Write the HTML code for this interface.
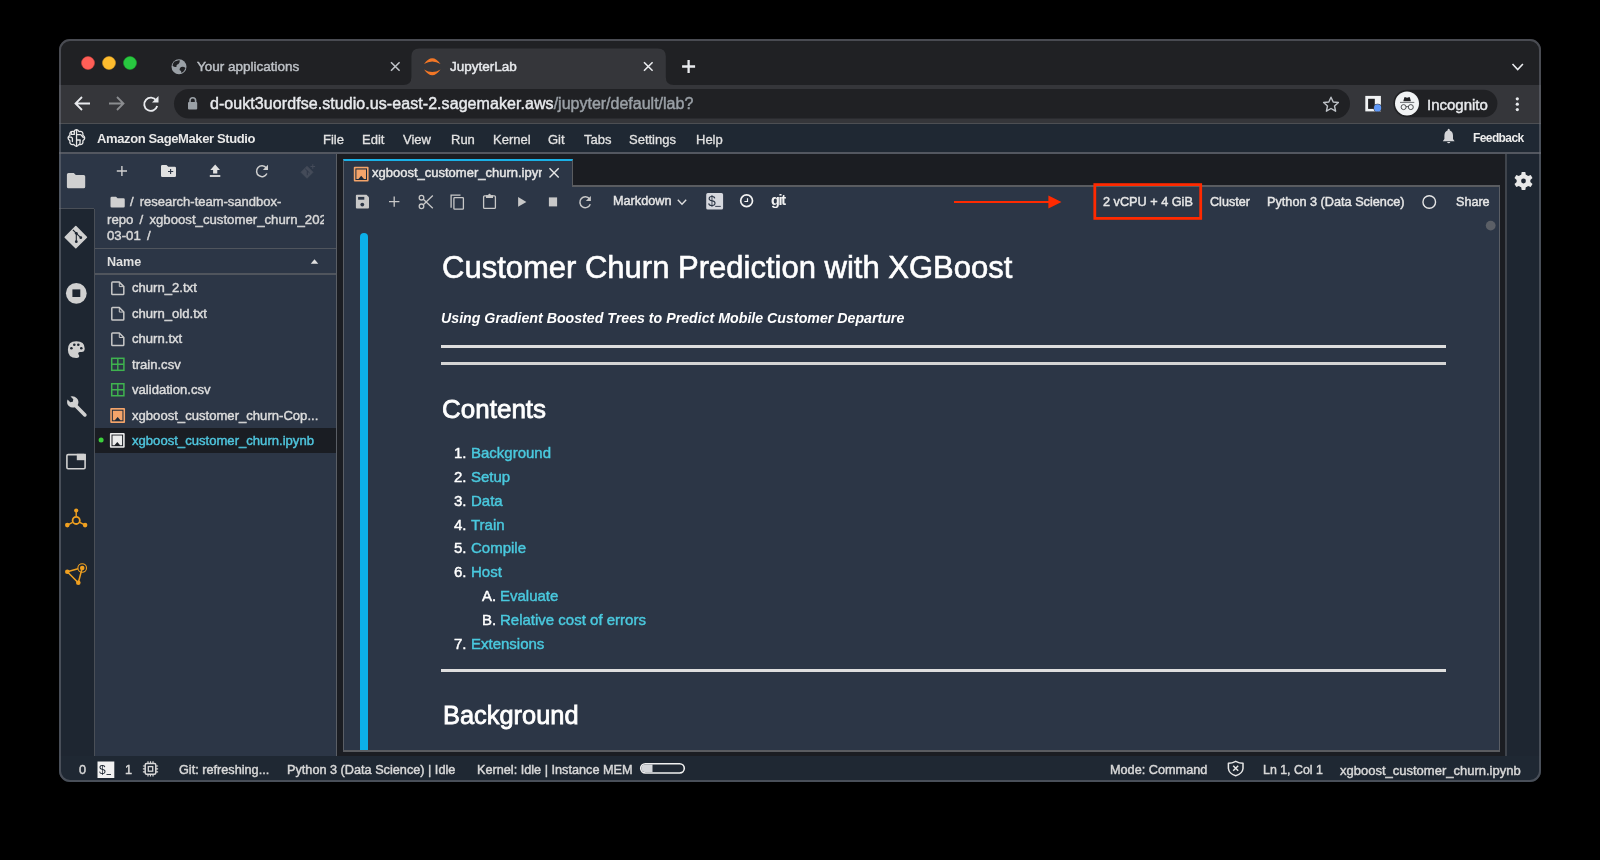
<!DOCTYPE html>
<html><head><meta charset="utf-8">
<style>
*{margin:0;padding:0;box-sizing:border-box}
html,body{width:1600px;height:860px;background:#000;overflow:hidden}
body{font-family:"Liberation Sans",sans-serif;position:relative}
.a{position:absolute}
.t{position:absolute;white-space:nowrap;line-height:1;-webkit-text-stroke-width:0.45px;will-change:transform}
#win{position:absolute;left:0;top:0;width:1600px;height:860px;clip-path:inset(39px 59px 78px 59px round 11px);background:#202124}
#frame{position:absolute;left:59px;top:39px;width:1482px;height:743px;border:2px solid rgba(108,112,120,0.55);border-radius:11px;pointer-events:none}
svg{position:absolute;overflow:visible}
</style></head><body>
<div id="win">
  <!-- chrome tab strip -->
  <div class="a" style="left:59px;top:39px;width:1482px;height:46px;background:#202124"></div>
  <!-- toolbar -->
  <div class="a" style="left:59px;top:85px;width:1482px;height:38px;background:#35363a"></div>
  <div class="a" style="left:59px;top:123px;width:1482px;height:1px;background:#4d4f53"></div>

  <!-- traffic lights -->
  <svg style="left:0;top:0" width="1600" height="860">
    <circle cx="88" cy="63" r="6.5" fill="#ff5f57" stroke="#e0443e" stroke-width="0.5"/>
    <circle cx="109" cy="63" r="6.5" fill="#febc2e" stroke="#dea123" stroke-width="0.5"/>
    <circle cx="130" cy="63" r="6.5" fill="#28c840" stroke="#1aab29" stroke-width="0.5"/>
    <!-- active tab -->
    <path d="M403.4,85 Q411.4,85 411.4,77 L411.4,56.5 Q411.4,48.5 419.4,48.5 L657.8,48.5 Q665.8,48.5 665.8,56.5 L665.8,77 Q665.8,85 673.8,85 Z" fill="#35363a"/>
    <!-- globe -->
    <circle cx="179" cy="66.7" r="7.5" fill="#9aa0a6"/>
    <path d="M174.5,61.5 Q177,60.5 179.5,60 Q180.5,62.5 178.5,64 Q176,64.5 176.5,67 Q174,67.5 172.5,65.5 Q173,63 174.5,61.5 Z M181,67 Q183.5,66 185.5,68 Q184.5,71.5 181.5,73 Q181.5,70.5 179.5,70 Q179.5,68 181,67 Z" fill="#202124"/>
    <!-- close x inactive -->
    <path d="M391,62.2 L399.6,70.8 M399.6,62.2 L391,70.8" stroke="#bdc1c6" stroke-width="1.6"/>
    <!-- jupyter icon -->
    <path d="M424,64 Q432.25,52.5 440.5,64 Q432.25,59 424,64 Z" fill="#f37726"/>
    <path d="M424,69.5 Q432.25,81 440.5,69.5 Q432.25,74.5 424,69.5 Z" fill="#f37726"/>
    <!-- close x active -->
    <path d="M644,62.2 L652.6,70.8 M652.6,62.2 L644,70.8" stroke="#e8eaed" stroke-width="1.6"/>
    <!-- new tab plus -->
    <path d="M688.6,60 L688.6,73 M682.1,66.5 L695.1,66.5" stroke="#e8eaed" stroke-width="2.3"/>
    <!-- chevron -->
    <path d="M1512.5,64 L1517.7,69.5 L1522.9,64" stroke="#e8eaed" stroke-width="1.6" fill="none"/>
    <!-- back -->
    <path d="M90,103.5 L76,103.5 M82,97 L75.5,103.5 L82,110" stroke="#e8eaed" stroke-width="1.8" fill="none"/>
    <!-- forward -->
    <path d="M109,103.5 L123,103.5 M117,97 L123.5,103.5 L117,110" stroke="#8b8d90" stroke-width="1.8" fill="none"/>
    <!-- reload -->
    <path d="M156.3,100.5 A6.6,6.6 0 1 0 157.2,106" stroke="#e8eaed" stroke-width="1.9" fill="none"/>
    <path d="M158.5,96 L158.5,102.5 L152,102.5 Z" fill="#e8eaed"/>
    <!-- omnibox -->
    <rect x="174" y="89" width="1176" height="29.5" rx="14.75" fill="#202124"/>
    <!-- lock -->
    <path d="M190,102.5 L190,100.5 A2.8,2.8 0 0 1 195.6,100.5 L195.6,102.5" stroke="#9aa0a6" stroke-width="1.6" fill="none"/>
    <rect x="188" y="102" width="9.2" height="7.5" rx="1" fill="#9aa0a6"/>
    <!-- star -->
    <path d="M1331,97.2 L1333.2,102 L1338.4,102.5 L1334.5,106 L1335.6,111.2 L1331,108.5 L1326.4,111.2 L1327.5,106 L1323.6,102.5 L1328.8,102 Z" stroke="#bdc1c6" stroke-width="1.4" fill="none" stroke-linejoin="round"/>
    <!-- extension icon -->
    <rect x="1365.3" y="95.9" width="15.6" height="15.5" fill="#f1f3f4"/>
    <rect x="1368.1" y="98.8" width="6.7" height="10.1" fill="#202124"/>
    <circle cx="1377.6" cy="107.9" r="4.1" fill="#35363a"/>
    <circle cx="1377.6" cy="107.9" r="3.6" fill="#5e97f6"/>
    <!-- incognito pill -->
    <rect x="1393.4" y="89.8" width="104" height="27.5" rx="13.75" fill="#202124"/>
    <circle cx="1407" cy="103.6" r="12" fill="#f1f3f4"/>
    <path d="M1403.3,101.2 L1404.3,97.6 Q1404.6,96.9 1405.4,97.2 L1407.1,97.8 L1408.8,97.2 Q1409.6,96.9 1409.9,97.6 L1410.9,101.2 Z" fill="#202124"/>
    <rect x="1400" y="101.9" width="14.3" height="0.9" fill="#5f6368"/>
    <circle cx="1403.6" cy="107.1" r="2.5" stroke="#3c4043" stroke-width="0.9" fill="none"/>
    <circle cx="1410.8" cy="107.1" r="2.5" stroke="#3c4043" stroke-width="0.9" fill="none"/>
    <path d="M1406,106.8 Q1407.2,106.2 1408.4,106.8" stroke="#3c4043" stroke-width="0.9" fill="none"/>
    <!-- kebab -->
    <circle cx="1517.3" cy="98.8" r="1.6" fill="#e8eaed"/>
    <circle cx="1517.3" cy="104.2" r="1.6" fill="#e8eaed"/>
    <circle cx="1517.3" cy="109.6" r="1.6" fill="#e8eaed"/>
  </svg>
  <div class="t" style="left:196.5px;top:59.6px;font-size:13.5px;color:#bdc1c6">Your applications</div>
  <div class="t" style="left:449.9px;top:59.6px;font-size:13.5px;color:#e8eaed">JupyterLab</div>
  <div class="t" style="left:210px;top:95.7px;font-size:16px;color:#e8eaed"><span style="letter-spacing:0.067px">d-oukt3uordfse.studio.us-east-2.sagemaker.aws</span><span style="color:#9aa0a6">/jupyter/default/lab?</span></div>
  <div class="t" style="left:1427px;top:97px;font-size:15px;color:#e8eaed">Incognito</div>
  <!-- sagemaker menubar -->
  <div class="a" style="left:59px;top:124px;width:1482px;height:28px;background:#1f2833"></div>
  <div class="a" style="left:59px;top:152px;width:1482px;height:2px;background:#535760"></div>
  <!-- main body -->
  <div class="a" style="left:59px;top:154px;width:1482px;height:602px;background:#1b1d22"></div>
  <!-- left sidebar -->
  <div class="a" style="left:59px;top:154px;width:35px;height:602px;background:#1e2631"></div>
  <div class="a" style="left:59px;top:154px;width:36px;height:55px;background:#2c3646"></div>
  <div class="a" style="left:59px;top:208px;width:35px;height:1px;background:#4a4f57"></div>
  <div class="a" style="left:94px;top:209px;width:1px;height:547px;background:#4a4f57"></div>
  <!-- file panel -->
  <div class="a" style="left:95px;top:154px;width:241px;height:602px;background:#2c3646"></div>
  <div class="a" style="left:336px;top:154px;width:1px;height:602px;background:#5a5e65"></div>
  <!-- right sidebar -->
  <div class="a" style="left:1505px;top:154px;width:2px;height:602px;background:#3f444c"></div>
  <div class="a" style="left:1507px;top:154px;width:34px;height:602px;background:#1e2631"></div>
  <!-- notebook panel -->
  <div class="a" style="left:343px;top:185px;width:1157px;height:567px;background:#2c3646;border:1px solid #5a5e65;border-top:2px solid #5a5c60;border-bottom:2px solid #5a5c60"></div>
  <!-- notebook tab -->
  <div class="a" style="left:343px;top:159px;width:230px;height:28px;background:#2c3646;border-left:1px solid #5a5e65;border-right:1.5px solid #5a5c60;border-top:2px solid #1ab0e6"></div>
  <div class="a" style="left:95px;top:427.8px;width:241px;height:25.2px;background:#1a1d23"></div>
  <!-- status bar -->
  <div class="a" style="left:59px;top:756px;width:1482px;height:26px;background:#1f2833"></div>

  <svg style="left:0;top:0" width="1600" height="860">
    <!-- brain -->
    <g fill="none" stroke="#e8e8e8" stroke-width="1.3" stroke-linejoin="round" stroke-linecap="round">
      <path d="M73.72,131.53 Q76.40,127.80 79.08,131.53 Q83.61,130.79 82.87,135.32 Q86.60,138.00 82.87,140.68 Q83.61,145.21 79.08,144.47 Q76.40,148.20 73.72,144.47 Q69.19,145.21 69.93,140.68 Q66.20,138.00 69.93,135.32 Q69.19,130.79 73.72,131.53 Z"/>
      <path d="M76.55,129.8 L76.55,146.2 M71.25,131.8 L71.25,134.4 L74.3,134.4 L74.3,131.5 M68.4,137.2 L71.4,137.2 L72.4,138.2 L72.4,141.6 M76.8,134.6 L80.7,134.6 L83.3,137.5 M76.8,140 L80.2,140 L79.9,143.6"/>
    </g>
    <!-- bell -->
    <path d="M1448.7,128.8 Q1449.8,128.8 1449.9,130.6 Q1452.9,131.7 1453,135.5 L1453,139 L1454.6,141.3 L1442.8,141.3 L1444.4,139 L1444.4,135.5 Q1444.5,131.7 1447.5,130.6 Q1447.6,128.8 1448.7,128.8 Z" fill="#d4d5d8"/>
    <path d="M1447.1,142 L1450.3,142 Q1450.1,143.2 1448.7,143.2 Q1447.3,143.2 1447.1,142 Z" fill="#d4d5d8"/>

    <!-- sidebar folder -->
    <path d="M68.5,172.9 L73.8,172.9 L75.8,174.9 L83.7,174.9 Q85.2,174.9 85.2,176.4 L85.2,186.8 Q85.2,188.3 83.7,188.3 L68.4,188.3 Q66.9,188.3 66.9,186.8 L66.9,174.5 Q66.9,172.9 68.5,172.9 Z" fill="#d0d0d0"/>
    <!-- git diamond -->
    <path d="M75.8,226.6 L86.4,237.2 L75.8,247.8 L65.2,237.2 Z" fill="#d0d0d0" stroke="#d0d0d0" stroke-width="1.5" stroke-linejoin="round"/>
    <g stroke="#1e2631" stroke-width="1.1" fill="none"><path d="M72.9,229.8 L76.3,233.3 L76.3,241.7 M76.3,233.3 L80.8,237.7"/></g>
    <circle cx="76.3" cy="233.3" r="1.4" fill="#1e2631"/><circle cx="80.8" cy="237.7" r="1.4" fill="#1e2631"/><circle cx="76.3" cy="241.7" r="1.4" fill="#1e2631"/>
    <!-- stop circle -->
    <circle cx="76.3" cy="293.35" r="10.4" fill="#d0d0d0"/>
    <rect x="72.4" y="289.4" width="7.9" height="7.6" fill="#1e2631"/>
    <!-- palette -->
    <path d="M76.3,341.3 Q84.7,341.3 84.7,348.5 Q84.7,352 81.5,352 L79.8,352 Q78.2,352 78.2,353.5 Q78.2,354.3 79,355.2 Q79.5,356 79,357 Q78.3,358.1 76.3,358.1 Q67.9,358.1 67.9,349.7 Q67.9,341.3 76.3,341.3 Z" fill="#d0d0d0"/>
    <circle cx="71.4" cy="348.25" r="1.3" fill="#1e2631"/><circle cx="74.3" cy="344.8" r="1.3" fill="#1e2631"/><circle cx="78.3" cy="344.8" r="1.3" fill="#1e2631"/><circle cx="81.3" cy="348.25" r="1.3" fill="#1e2631"/>
    <!-- wrench -->
    <path d="M84.9,414.9 L75.3,405.3" stroke="#d0d0d0" stroke-width="3.6" stroke-linecap="round"/>
    <path d="M70.5,396.5 L73.3,399.3 L72.8,401.8 L70.3,402.3 L67.5,399.5 Q66.2,403.5 68.8,406 Q71.5,408.5 75.5,407 L78,404.5 Q79.3,400.7 76.8,398.2 Q74.3,395.7 70.5,396.5 Z" fill="#d0d0d0"/>
    <!-- tabs -->
    <rect x="66.9" y="454.6" width="18.2" height="14.2" rx="1.2" fill="none" stroke="#d0d0d0" stroke-width="1.6"/>
    <rect x="76.8" y="453.8" width="9.1" height="6.4" fill="#d0d0d0"/>
    <!-- orange 1 -->
    <g stroke="#f0a020" stroke-width="1.4" fill="none">
      <path d="M76.2,510.5 L76.2,516 M67.3,525.1 L72.6,522.3 M85.1,525.1 L79.8,522.3"/>
      <circle cx="76.2" cy="520.4" r="3.6" stroke-width="1.8"/>
    </g>
    <circle cx="76.2" cy="510.5" r="2.1" fill="#f0a020"/><circle cx="67.3" cy="525.1" r="2.3" fill="#f0a020"/><circle cx="85.1" cy="525.1" r="2.3" fill="#f0a020"/>
    <!-- orange 2 -->
    <g stroke="#f0a020" stroke-width="1.5" fill="none">
      <path d="M67.3,571.7 L78.3,582.7 L82.2,568 M67.3,571.7 L78,568.8"/>
      <circle cx="82.2" cy="568" r="4.3" stroke-width="1.1"/>
    </g>
    <circle cx="67.3" cy="571.7" r="2.3" fill="#f0a020"/><circle cx="78.3" cy="582.7" r="2.3" fill="#f0a020"/><circle cx="82.2" cy="568" r="2.3" fill="#f0a020"/>

    <!-- file panel toolbar -->
    <path d="M121.9,165.9 L121.9,176.1 M116.8,171 L127,171" stroke="#d0d0d0" stroke-width="1.4"/>
    <path d="M162.3,164.9 L166.5,164.9 L168.3,166.7 L174.7,166.7 Q176,166.7 176,168 L176,175.8 Q176,177.1 174.7,177.1 L162.3,177.1 Q161,177.1 161,175.8 L161,166.2 Q161,164.9 162.3,164.9 Z" fill="#e0e0e0"/>
    <path d="M170.6,168.9 L170.6,174.1 M168,171.5 L173.2,171.5" stroke="#2c3646" stroke-width="1.1"/>
    <path d="M215.2,164.6 L220,170 L217.3,170 L217.3,173.4 L213.1,173.4 L213.1,170 L210.3,170 Z" fill="#e0e0e0"/>
    <rect x="209.8" y="175.1" width="10.5" height="1.8" fill="#e0e0e0"/>
    <path d="M266.3,168 A5.4,5.4 0 1 0 266.9,173.5" stroke="#d0d0d0" stroke-width="1.5" fill="none"/>
    <path d="M268,164.8 L268,170 L262.8,170 Z" fill="#d0d0d0"/>
    <path d="M307,166.3 L313,172.3 L307,178.3 L301,172.3 Z" fill="#444b59" stroke="#444b59" stroke-width="0.8" stroke-linejoin="round"/>
    <path d="M305.2,168.8 L307.3,170.8 L307.3,175.2 M307.3,170.8 L309.6,173" stroke="#2c3646" stroke-width="0.9" fill="none"/>
    <path d="M312.8,164.2 L312.8,168.8 M310.5,166.5 L315.1,166.5" stroke="#444b59" stroke-width="1"/>
    <!-- breadcrumb folder -->
    <path d="M111.8,196.7 L116,196.7 L117.6,198.3 L123.5,198.3 Q124.75,198.3 124.75,199.5 L124.75,206.3 Q124.75,207.5 123.5,207.5 L111.8,207.5 Q110.5,207.5 110.5,206.3 L110.5,198 Q110.5,196.7 111.8,196.7 Z" fill="#d0d0d0"/>
    <!-- sort triangle -->
    <path d="M310.75,263.75 L314.5,259.25 L318.25,263.75 Z" fill="#e0e0e0"/>
    <path d="M112.5,282.10 L119.3,282.10 L123.8,286.60 L123.8,293.80 Q123.8,294.60 123,294.60 L112.6,294.60 Q111.8,294.60 111.8,293.80 L111.8,282.90 Q111.8,282.10 112.5,282.10 Z" fill="none" stroke="#c8c8c8" stroke-width="1.5" stroke-linejoin="round"/>
    <path d="M119.3,282.10 L119.3,286.60 L123.8,286.60" fill="none" stroke="#c8c8c8" stroke-width="1" />
    <path d="M112.5,307.55 L119.3,307.55 L123.8,312.05 L123.8,319.25 Q123.8,320.05 123,320.05 L112.6,320.05 Q111.8,320.05 111.8,319.25 L111.8,308.35 Q111.8,307.55 112.5,307.55 Z" fill="none" stroke="#c8c8c8" stroke-width="1.5" stroke-linejoin="round"/>
    <path d="M119.3,307.55 L119.3,312.05 L123.8,312.05" fill="none" stroke="#c8c8c8" stroke-width="1" />
    <path d="M112.5,333.00 L119.3,333.00 L123.8,337.50 L123.8,344.70 Q123.8,345.50 123,345.50 L112.6,345.50 Q111.8,345.50 111.8,344.70 L111.8,333.80 Q111.8,333.00 112.5,333.00 Z" fill="none" stroke="#c8c8c8" stroke-width="1.5" stroke-linejoin="round"/>
    <path d="M119.3,333.00 L119.3,337.50 L123.8,337.50" fill="none" stroke="#c8c8c8" stroke-width="1" />
    <rect x="111.7" y="358.30" width="12.2" height="12" fill="none" stroke="#3fb34f" stroke-width="1.5"/>
    <path d="M117.8,358.30 L117.8,370.30 M111.7,364.30 L123.9,364.30" stroke="#3fb34f" stroke-width="1.4"/>
    <rect x="111.7" y="383.75" width="12.2" height="12" fill="none" stroke="#3fb34f" stroke-width="1.5"/>
    <path d="M117.8,383.75 L117.8,395.75 M111.7,389.75 L123.9,389.75" stroke="#3fb34f" stroke-width="1.4"/>
    <rect x="110.25" y="408.1" width="14.8" height="14.8" rx="1" fill="#f4a46a"/>
    <rect x="111.85" y="409.70000000000005" width="11.6" height="11.6" fill="#1f2b3a"/>
    <path d="M112.85,410.70000000000005 L122.45,410.70000000000005 L122.45,420.3 L120.45,420.3 L117.65,417.1 L114.85,420.3 L112.85,420.3 Z" fill="#f4a46a"/>
    <rect x="109.9" y="433.0" width="14.8" height="14.8" rx="1" fill="#ececec"/>
    <rect x="111.5" y="434.6" width="11.6" height="11.6" fill="#1a1d23"/>
    <path d="M112.5,435.6 L122.10000000000001,435.6 L122.10000000000001,445.2 L120.10000000000001,445.2 L117.30000000000001,442.0 L114.5,445.2 L112.5,445.2 Z" fill="#ececec"/>
    <circle cx="101.1" cy="440.1" r="2.5" fill="#3ccf3c"/>
    <rect x="353.8" y="166.8" width="14.8" height="14.8" rx="1" fill="#f4a46a"/>
    <rect x="355.40000000000003" y="168.4" width="11.6" height="11.6" fill="#1f2b3a"/>
    <path d="M356.40000000000003,169.4 L366.0,169.4 L366.0,179.0 L364.0,179.0 L361.2,175.8 L358.40000000000003,179.0 L356.40000000000003,179.0 Z" fill="#f4a46a"/>

    <!-- tab close -->
    <path d="M549.5,168.2 L558.7,177.4 M558.7,168.2 L549.5,177.4" stroke="#e6e6e6" stroke-width="1.4"/>
    <!-- notebook toolbar -->
    <path d="M356.8,194.8 L366.5,194.8 L369,197.3 L369,207.6 Q369,208.6 368,208.6 L356.9,208.6 Q355.9,208.6 355.9,207.6 L355.9,195.8 Q355.9,194.8 356.8,194.8 Z" fill="#c8c8c8"/>
    <rect x="358.1" y="196.9" width="6.2" height="2.8" fill="#2c3646"/>
    <circle cx="362.3" cy="204.6" r="1.9" fill="#2c3646"/>
    <path d="M394.2,196.6 L394.2,206.8 M389,201.7 L399.4,201.7" stroke="#c8c8c8" stroke-width="1.3"/>
    <g stroke="#c8c8c8" stroke-width="1.3" fill="none">
      <circle cx="421.5" cy="197.7" r="2.3"/><circle cx="421.5" cy="206.3" r="2.3"/>
      <path d="M423.3,199.2 L432.8,208.2 M423.3,204.8 L432.8,195.5"/>
    </g>
    <g stroke="#c8c8c8" stroke-width="1.3" fill="none">
      <path d="M451.1,207.8 L451.1,195.2 L460.5,195.2"/>
      <rect x="453.9" y="197.6" width="9.5" height="11.6" rx="0.8"/>
    </g>
    <g stroke="#c8c8c8" stroke-width="1.3" fill="none">
      <rect x="483.6" y="195.8" width="11.8" height="12.6" rx="1"/>
    </g>
    <rect x="486" y="195.2" width="7" height="2.8" fill="#c8c8c8"/>
    <circle cx="489.5" cy="194.9" r="1.2" fill="#c8c8c8"/>
    <path d="M518.1,197 L526.4,201.9 L518.1,206.75 Z" fill="#c8c8c8"/>
    <rect x="548.9" y="197.4" width="8.2" height="9" fill="#c8c8c8"/>
    <path d="M589.6,199 A5.4,5.4 0 1 0 590.3,204.3" stroke="#c8c8c8" stroke-width="1.5" fill="none"/>
    <path d="M590.9,195.9 L590.9,201 L585.8,201 Z" fill="#c8c8c8"/>
    <path d="M677.8,199.8 L682,204.2 L686.2,199.8" stroke="#e0e0e0" stroke-width="1.4" fill="none"/>
    <rect x="706.2" y="193.1" width="16.9" height="16.5" rx="1.6" fill="#d6d8de"/>
    <path d="M715.2,206.4 L720.8,206.4" stroke="#2c3646" stroke-width="0.9"/>
    <circle cx="746.6" cy="200.7" r="5.9" fill="none" stroke="#f2f2f2" stroke-width="1.7"/>
    <path d="M747.5,198.3 L747.5,201.5 L744.4,201.5" fill="none" stroke="#f2f2f2" stroke-width="1.2"/>
    <!-- red arrow + box -->
    <path d="M954,201.9 L1049,201.9" stroke="#ff2a00" stroke-width="2"/>
    <path d="M1048.4,195.4 L1061.5,201.9 L1048.4,208.5 Z" fill="#ff2a00"/>
    <rect x="1094.8" y="184.6" width="105.9" height="33.8" fill="none" stroke="#ff2a00" stroke-width="2.8"/>
    <!-- kernel circle -->
    <circle cx="1429.25" cy="202" r="6.3" fill="none" stroke="#e6e6e6" stroke-width="1.4"/>
    <circle cx="1490.7" cy="225.6" r="4.9" fill="#5b5f66"/>
    <!-- gear -->
    <g transform="translate(1523.5,181)">
      <path d="M-1.8,-9 L1.8,-9 L2.3,-6.3 Q3.6,-5.8 4.6,-5 L7.2,-6 L9,-2.9 L6.8,-1.1 Q7,0 6.8,1.1 L9,2.9 L7.2,6 L4.6,5 Q3.6,5.8 2.3,6.3 L1.8,9 L-1.8,9 L-2.3,6.3 Q-3.6,5.8 -4.6,5 L-7.2,6 L-9,2.9 L-6.8,1.1 Q-7,0 -6.8,-1.1 L-9,-2.9 L-7.2,-6 L-4.6,-5 Q-3.6,-5.8 -2.3,-6.3 Z" fill="#e8e8e8"/>
      <circle cx="0" cy="0" r="2.4" fill="#1f2733"/>
    </g>
    <!-- status bar icons -->
    <rect x="97.5" y="761.5" width="16.8" height="16.5" fill="#f2f2f2"/>
    <path d="M106.5,774.5 L111,774.5" stroke="#1f2833" stroke-width="0.9"/>
    <g stroke="#d8d8d8" fill="none">
      <rect x="145.2" y="763.5" width="10.6" height="10.8" rx="1.5" stroke-width="1.5"/>
      <rect x="148.3" y="766.6" width="4.4" height="4.6" stroke-width="1.3"/>
      <path d="M148,761.2 L148,763.5 M150.5,761.2 L150.5,763.5 M153,761.2 L153,763.5 M148,774.3 L148,776.6 M150.5,774.3 L150.5,776.6 M153,774.3 L153,776.6 M142.9,766 L145.2,766 M142.9,768.9 L145.2,768.9 M142.9,771.8 L145.2,771.8 M155.8,766 L158.1,766 M155.8,768.9 L158.1,768.9 M155.8,771.8 L158.1,771.8" stroke-width="1.2"/>
    </g>
    <rect x="640.7" y="763.7" width="43.6" height="9.3" rx="4.65" fill="none" stroke="#f0f0f0" stroke-width="1.6"/>
    <path d="M645.3,764.5 L652.5,764.5 L652.5,772.2 L645.3,772.2 A3.85,3.85 0 0 1 645.3,764.5 Z" fill="#d4d6da"/>
    <path d="M1235.7,761.3 Q1239.5,763.2 1243,763.3 L1243,768.5 Q1242.5,773.5 1235.7,775.7 Q1228.9,773.5 1228.4,768.5 L1228.4,763.3 Q1231.9,763.2 1235.7,761.3 Z" fill="none" stroke="#e8e8e8" stroke-width="1.5" stroke-linejoin="round"/>
    <path d="M1233.2,765.7 L1238.2,770.7 M1238.2,765.7 L1233.2,770.7" stroke="#e8e8e8" stroke-width="1.5"/>
  </svg>
  <!-- blue cell bar -->
  <div class="a" style="left:360px;top:232.5px;width:8px;height:517px;background:#0cb0e8;border-radius:4px 4px 0 0"></div>

  <div class="t" style="left:96.9px;top:131.75px;font-size:13px;color:#e8e8e8;font-weight:700;-webkit-text-stroke-width:0;letter-spacing:-0.38px">Amazon SageMaker Studio</div>
  <div class="t" style="left:322.75px;top:132.75px;font-size:13px;color:#e2e2e2;-webkit-text-stroke:0.3px #e2e2e2">File</div>
  <div class="t" style="left:361.9px;top:132.75px;font-size:13px;color:#e2e2e2;-webkit-text-stroke:0.3px #e2e2e2">Edit</div>
  <div class="t" style="left:403.1px;top:132.75px;font-size:13px;color:#e2e2e2;-webkit-text-stroke:0.3px #e2e2e2">View</div>
  <div class="t" style="left:450.6px;top:132.75px;font-size:13px;color:#e2e2e2;-webkit-text-stroke:0.3px #e2e2e2">Run</div>
  <div class="t" style="left:492.5px;top:132.75px;font-size:13px;color:#e2e2e2;-webkit-text-stroke:0.3px #e2e2e2">Kernel</div>
  <div class="t" style="left:547.5px;top:132.75px;font-size:13px;color:#e2e2e2;-webkit-text-stroke:0.3px #e2e2e2">Git</div>
  <div class="t" style="left:583.75px;top:132.75px;font-size:13px;color:#e2e2e2;-webkit-text-stroke:0.3px #e2e2e2">Tabs</div>
  <div class="t" style="left:629.25px;top:132.75px;font-size:13px;color:#e2e2e2;-webkit-text-stroke:0.3px #e2e2e2">Settings</div>
  <div class="t" style="left:695.75px;top:132.75px;font-size:13px;color:#e2e2e2;-webkit-text-stroke:0.3px #e2e2e2">Help</div>
  <div class="t" style="left:1473px;top:132.14px;font-size:12px;color:#ececec;font-weight:700;-webkit-text-stroke-width:0;letter-spacing:-0.6px">Feedback</div>
  <div class="t" style="left:130px;top:194.83px;font-size:13px;color:#d8d8d8;word-spacing:2.5px">/ research-team-sandbox-</div>
  <div class="a" style="left:107px;top:208px;width:216.5px;height:20px;overflow:hidden">  <div class="t" style="left:0px;top:4.53px;font-size:13.2px;color:#d8d8d8;word-spacing:2.5px">repo / xgboost_customer_churn_2021-</div>
</div>
  <div class="t" style="left:107.2px;top:228.58px;font-size:13.2px;color:#d8d8d8;word-spacing:2.5px">03-01 /</div>
  <div class="a" style="left:95px;top:247.5px;width:241px;height:1.6px;background:#50555d"></div>
  <div class="a" style="left:95px;top:273px;width:241px;height:1.6px;background:#50555d"></div>
  <div class="t" style="left:107.2px;top:256.33px;font-size:12.6px;color:#e0e0e0;font-weight:700;-webkit-text-stroke-width:0">Name</div>
  <div class="t" style="left:132.4px;top:281.49px;font-size:13.1px;color:#dcdcdc;">churn_2.txt</div>
  <div class="t" style="left:132.4px;top:306.94px;font-size:13.1px;color:#dcdcdc;">churn_old.txt</div>
  <div class="t" style="left:132.4px;top:332.39px;font-size:13.1px;color:#dcdcdc;">churn.txt</div>
  <div class="t" style="left:132.4px;top:357.84px;font-size:13.1px;color:#dcdcdc;">train.csv</div>
  <div class="t" style="left:132.4px;top:383.29px;font-size:13.1px;color:#dcdcdc;">validation.csv</div>
  <div class="t" style="left:132.4px;top:408.74px;font-size:13.1px;color:#dcdcdc;">xgboost_customer_churn-Cop...</div>
  <div class="t" style="left:132.4px;top:434.19px;font-size:13.1px;color:#4fc4dc;">xgboost_customer_churn.ipynb</div>
  <div class="a" style="left:372px;top:160px;width:170px;height:24px;overflow:hidden">  <div class="t" style="left:0.2px;top:6.20px;font-size:13px;color:#e6e6e6;">xgboost_customer_churn.ipynb</div>
</div>
  <div class="t" style="left:612.5px;top:194.85px;font-size:12.7px;color:#e6e6e6;">Markdown</div>
  <div class="t" style="left:771px;top:192.93px;font-size:14.5px;color:#f2f2f2;font-weight:700;-webkit-text-stroke-width:0;letter-spacing:-1.3px">git</div>
  <div class="t" style="left:1102.75px;top:195.50px;font-size:12.7px;color:#e6e6e6;">2 vCPU + 4 GiB</div>
  <div class="t" style="left:1210.3px;top:195.58px;font-size:12.6px;color:#e6e6e6;">Cluster</div>
  <div class="t" style="left:1267.3px;top:195.50px;font-size:12.7px;color:#e6e6e6;">Python 3 (Data Science)</div>
  <div class="t" style="left:1456px;top:195.58px;font-size:12.6px;color:#e6e6e6;">Share</div>
  <div class="t" style="left:442.2px;top:252.16px;font-size:31px;color:#ffffff;-webkit-text-stroke-width:0.6px">Customer Churn Prediction with XGBoost</div>
  <div class="t" style="left:441.25px;top:311.38px;font-size:14.2px;color:#ffffff;font-weight:700;-webkit-text-stroke-width:0;font-style:italic">Using Gradient Boosted Trees to Predict Mobile Customer Departure</div>
  <div class="a" style="left:440.5px;top:345px;width:1005px;height:3px;background:#dedede"></div>
  <div class="a" style="left:440.5px;top:362px;width:1005px;height:3px;background:#d4d4d4"></div>
  <div class="t" style="left:441.75px;top:395.74px;font-size:26px;color:#ffffff;-webkit-text-stroke-width:0.8px">Contents</div>
  <div class="t" style="left:454.1px;top:445.20px;font-size:15px;color:#ffffff;">1.</div>
  <div class="t" style="left:471px;top:445.20px;font-size:15px;color:#4ac9de;">Background</div>
  <div class="t" style="left:454.1px;top:469.00px;font-size:15px;color:#ffffff;">2.</div>
  <div class="t" style="left:471px;top:469.00px;font-size:15px;color:#4ac9de;">Setup</div>
  <div class="t" style="left:454.1px;top:492.80px;font-size:15px;color:#ffffff;">3.</div>
  <div class="t" style="left:471px;top:492.80px;font-size:15px;color:#4ac9de;">Data</div>
  <div class="t" style="left:454.1px;top:516.60px;font-size:15px;color:#ffffff;">4.</div>
  <div class="t" style="left:471px;top:516.60px;font-size:15px;color:#4ac9de;">Train</div>
  <div class="t" style="left:454.1px;top:540.40px;font-size:15px;color:#ffffff;">5.</div>
  <div class="t" style="left:471px;top:540.40px;font-size:15px;color:#4ac9de;">Compile</div>
  <div class="t" style="left:454.1px;top:564.20px;font-size:15px;color:#ffffff;">6.</div>
  <div class="t" style="left:471px;top:564.20px;font-size:15px;color:#4ac9de;">Host</div>
  <div class="t" style="left:481.8px;top:588.00px;font-size:15px;color:#ffffff;">A.</div>
  <div class="t" style="left:500px;top:588.00px;font-size:15px;color:#4ac9de;">Evaluate</div>
  <div class="t" style="left:481.8px;top:611.80px;font-size:15px;color:#ffffff;">B.</div>
  <div class="t" style="left:500.1px;top:611.80px;font-size:15px;color:#4ac9de;">Relative cost of errors</div>
  <div class="t" style="left:454.1px;top:635.60px;font-size:15px;color:#ffffff;">7.</div>
  <div class="t" style="left:470.8px;top:635.60px;font-size:15px;color:#4ac9de;">Extensions</div>
  <div class="a" style="left:440.5px;top:669px;width:1005px;height:3px;background:#dedede"></div>
  <div class="t" style="left:442.5px;top:703.00px;font-size:25.4px;color:#ffffff;-webkit-text-stroke-width:0.8px">Background</div>
  <div class="t" style="left:78.5px;top:764.05px;font-size:12.7px;color:#d8d8d8;">0</div>
  <div class="t" style="left:125px;top:764.05px;font-size:12.7px;color:#d8d8d8;">1</div>
  <div class="t" style="left:178.7px;top:764.05px;font-size:12.7px;color:#d8d8d8;">Git: refreshing...</div>
  <div class="t" style="left:286.6px;top:764.05px;font-size:12.7px;color:#d8d8d8;">Python 3 (Data Science) | Idle</div>
  <div class="t" style="left:477.4px;top:764.05px;font-size:12.7px;color:#d8d8d8;">Kernel: Idle | Instance MEM</div>
  <div class="t" style="left:1110px;top:764.05px;font-size:12.7px;color:#d8d8d8;">Mode: Command</div>
  <div class="t" style="left:1263px;top:764.30px;font-size:12.4px;color:#d8d8d8;">Ln 1, Col 1</div>
  <div class="t" style="left:1340.3px;top:763.80px;font-size:13px;color:#d8d8d8;">xgboost_customer_churn.ipynb</div>
  <div class="t" style="left:707.6px;top:194.3px;font-size:14px;color:#2c3646;-webkit-text-stroke-width:0">$</div>
  <div class="t" style="left:99.2px;top:764px;font-size:12px;color:#1f2833;-webkit-text-stroke-width:0">$</div>
</div>
<div id="frame"></div>
</body></html>
